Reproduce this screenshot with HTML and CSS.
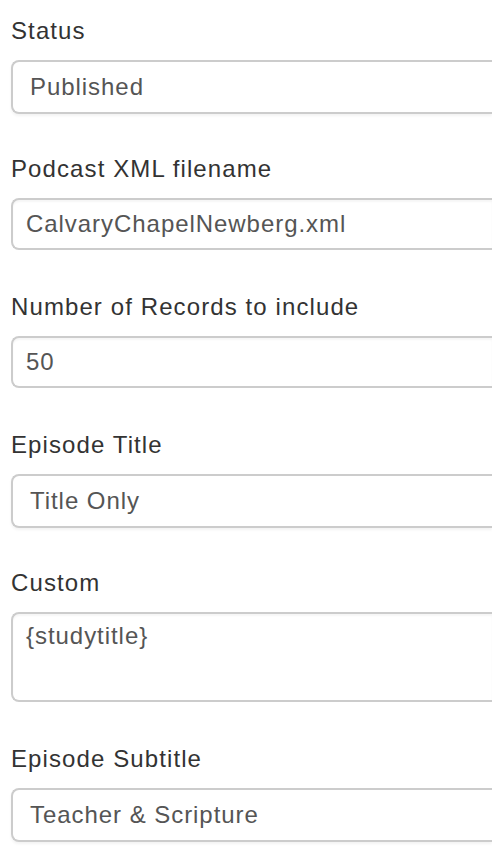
FILE: index.html
```html
<!DOCTYPE html>
<html>
<head>
<meta charset="utf-8">
<link rel="stylesheet" href="styles.css">
</head>
<body>
<form class="form">
  <div class="group">
    <label class="label">Status</label>
    <div class="field select">Published</div>
  </div>
  <div class="group">
    <label class="label">Podcast XML filename</label>
    <div class="field input">CalvaryChapelNewberg.xml</div>
  </div>
  <div class="group">
    <label class="label">Number of Records to include</label>
    <div class="field input">50</div>
  </div>
  <div class="group">
    <label class="label">Episode Title</label>
    <div class="field select">Title Only</div>
  </div>
  <div class="group">
    <label class="label">Custom</label>
    <div class="field textarea">{studytitle}</div>
  </div>
  <div class="group">
    <label class="label">Episode Subtitle</label>
    <div class="field select">Teacher &amp; Scripture</div>
  </div>
</form>
</body>
</html>
```
FILE: styles.css
```css
html, body {
  margin: 0;
  padding: 0;
  background: #ffffff;
}
body {
  font-family: "Liberation Sans", Arial, sans-serif;
  font-size: 24px;
  color: #333333;
}
.form {
  display: flex;
  flex-direction: column;
  padding: 13px 0 0 11px;
}
.group {
  display: flex;
  flex-direction: column;
}
.label {
  display: block;
  height: 36px;
  line-height: 36px;
  margin-bottom: 11px;
  color: #333333;
  letter-spacing: 1.1px;
}
.field {
  box-sizing: border-box;
  width: 100%;
  border: 2px solid #cccccc;
  border-right: none;
  border-radius: 8px 0 0 8px;
  background: #ffffff;
  color: #555555;
  display: flex;
  align-items: center;
  letter-spacing: 0.95px;
}
.select {
  height: 54px;
  padding-left: 17px;
  margin-bottom: 37px;
  box-shadow: 0 2px 3px rgba(0, 0, 0, 0.05);
}
.input {
  height: 52px;
  padding-left: 13px;
  margin-bottom: 39px;
  box-shadow: inset 0 2px 2px rgba(0, 0, 0, 0.04);
}
.textarea {
  height: 90px;
  padding: 8px 0 0 13px;
  align-items: flex-start;
  margin-bottom: 39px;
  box-shadow: inset 0 2px 2px rgba(0, 0, 0, 0.04);
}
```
